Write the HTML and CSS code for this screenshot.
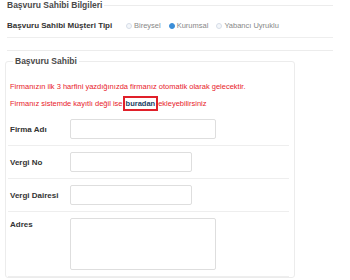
FILE: index.html
```html
<!DOCTYPE html>
<html lang="tr">

<head>
  <meta charset="UTF-8">
  <meta name="viewport" content="width=device-width, initial-scale=1.0">
  <title>Başvuru Sahibi Bilgileri</title>
  <link rel="stylesheet" href="styles.css">
</head>

<body>
  <fieldset class="group group-top">
    <legend>Başvuru Sahibi Bilgileri</legend>
    <div class="type-row">
      <span class="type-label">Başvuru Sahibi Müşteri Tipi</span>
      <label class="radio"><input type="radio" name="tip">Bireysel</label>
      <label class="radio"><input type="radio" name="tip" checked>Kurumsal</label>
      <label class="radio"><input type="radio" name="tip">Yabancı Uyruklu</label>
    </div>
  </fieldset>

  <fieldset class="group group-inner">
    <legend>Başvuru Sahibi</legend>
    <p class="note note-first">Firmanızın ilk 3 harfini yazdığınızda firmanız otomatik olarak gelecektir.</p>
    <p class="note note-second">Firmanız sistemde kayıtlı değil ise<a href="#" class="note-link">buradan</a>ekleyebilirsiniz</p>

    <div class="form-row">
      <label for="firma">Firma Adı</label>
      <input type="text" id="firma" class="field field-wide">
    </div>
    <div class="form-row">
      <label for="vergiNo">Vergi No</label>
      <input type="text" id="vergiNo" class="field">
    </div>
    <div class="form-row">
      <label for="vergiDairesi">Vergi Dairesi</label>
      <input type="text" id="vergiDairesi" class="field">
    </div>
    <div class="form-row form-row-top">
      <label for="adres">Adres</label>
      <textarea id="adres" class="field field-wide field-area"></textarea>
    </div>
  </fieldset>
</body>

</html>
```

FILE: styles.css
```css
body {
  margin: 0;
  font-family: "Liberation Sans", Arial, sans-serif;
  color: #333;
  background-color: #fff;
}

.group {
  margin: 0;
  border: 1px solid #ececec;
  min-width: 0;
}

.group legend {
  font-size: 8.5px;
  font-weight: bold;
  color: #4a4a4a;
  line-height: 10px;
}

.group-top {
  margin: 0 17px 0 7px;
  padding: 0 0 12px;
  border-left: none;
  border-right: none;
}

.group-top legend {
  padding: 0 2px 0 0;
}

.type-row {
  display: flex;
  align-items: center;
  padding: 10px 0 6px;
  border-bottom: 1px solid #eee;
  line-height: 11px;
}

.type-label {
  width: 119px;
  font-size: 8px;
  font-weight: bold;
  color: #333;
}

.radio {
  display: flex;
  align-items: center;
  gap: 2px;
  margin-right: 8px;
  font-size: 7.5px;
  color: #888;
}

.radio input {
  appearance: none;
  width: 6px;
  height: 6px;
  margin: 0;
  border: 1px solid #d6dee8;
  border-radius: 50%;
  background-color: #f4f7fa;
}

.radio input:checked {
  background-color: #3b8ed8;
  border-color: #3b8ed8;
}

.group-inner {
  width: 290px;
  box-sizing: border-box;
  margin: 5px 0 0 5px;
  padding: 0 5px 0 2px;
  border-radius: 3px;
}

.group-inner legend {
  margin-left: 5px;
  padding: 0 2px;
}

.note {
  margin: 0;
  padding-left: 2px;
  font-size: 7.5px;
  line-height: 12px;
  color: #e8212b;
}

.note-first {
  margin-top: 15px;
}

.note-second {
  margin-top: 5px;
  margin-bottom: 3px;
}

.note-link {
  padding: 1px 1px;
  border: 2px solid #e0202a;
  color: #1b3f66;
  font-weight: bold;
  text-decoration: none;
}

.form-row {
  display: flex;
  align-items: center;
  padding: 6px 0;
  border-bottom: 1px solid #eee;
}

.form-row-top {
  align-items: flex-start;
}

.form-row label {
  width: 62px;
  box-sizing: border-box;
  padding-left: 2px;
  font-size: 8px;
  font-weight: bold;
  color: #333;
}

.form-row-top label {
  padding-top: 2px;
}

.field {
  width: 122px;
  height: 20px;
  box-sizing: border-box;
  margin: 0;
  border: 1px solid #dedede;
  border-radius: 2px;
  background-color: #fff;
}

.field-wide {
  width: 146px;
}

.field-area {
  height: 52px;
  resize: none;
}
```
